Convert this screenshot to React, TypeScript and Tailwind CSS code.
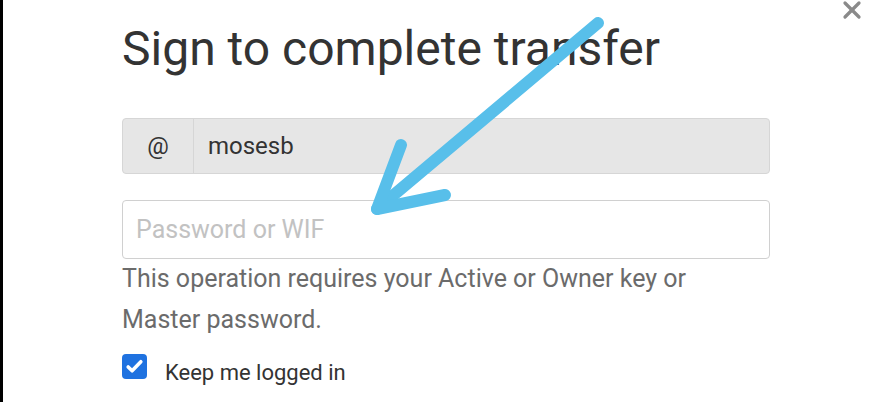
import { X } from "lucide-react";

const App = () => {
  return (
    <div
      className="relative w-[888px] h-[402px] overflow-hidden bg-white border-l-[3px] border-black"
      style={{ fontFamily: "Roboto, 'Noto Sans', sans-serif" }}
    >
      <button className="absolute right-[22px] top-[-4px] text-[#8a8a8a]">
        <X size={28} strokeWidth={2.8} />
      </button>

      <div className="pl-[119px] pr-[118px] pt-[20px] flex flex-col">
        <h1 className="text-[48px] leading-[58px] text-[#333333] font-normal">
          Sign to complete transfer
        </h1>

        <div className="mt-[40px] flex h-[56px] rounded-[4px] border border-[#d6d6d6] bg-[#e6e6e6]">
          <div className="w-[71px] flex items-center justify-center text-[24px] text-[#333] border-r border-[#d6d6d6]">
            @
          </div>
          <div className="flex-1 flex items-center pl-[14px] text-[24px] text-[#333]">mosesb</div>
        </div>

        <div className="mt-[26px] h-[59px] rounded-[4px] border border-[#d0d0d0] bg-white flex items-center px-[13px]">
          <input
            className="w-full outline-none text-[25px] text-[#333] placeholder:text-[#c2c2c2] bg-transparent"
            placeholder="Password or WIF"
          />
        </div>

        <p className="mt-[-1px] text-[25px] leading-[41px] text-[#6b6b6b]">
          This operation requires your Active or Owner key or
          <br />
          Master password.
        </p>

        <label className="mt-[14px] flex items-start gap-[18px]">
          <span className="w-[25px] h-[25px] rounded-[4px] bg-[#1f72e0] flex items-center justify-center">
            <svg width="19" height="19" viewBox="0 0 24 24" fill="none" stroke="white" strokeWidth="4.5" strokeLinecap="round" strokeLinejoin="round">
              <path d="M4 12.5l5 5L20 6" />
            </svg>
          </span>
          <span className="text-[22px] leading-[26px] pt-[6px] text-[#333]">Keep me logged in</span>
        </label>
      </div>

      <svg className="absolute left-0 top-0 pointer-events-none" width="888" height="402">
        <g stroke="#58bfea" strokeWidth="12" strokeLinecap="round" strokeLinejoin="round" fill="none">
          <path d="M595 23 L374 209" />
          <path d="M398 145 L374 209 L442 195" />
        </g>
      </svg>
    </div>
  );
};

export default App;
